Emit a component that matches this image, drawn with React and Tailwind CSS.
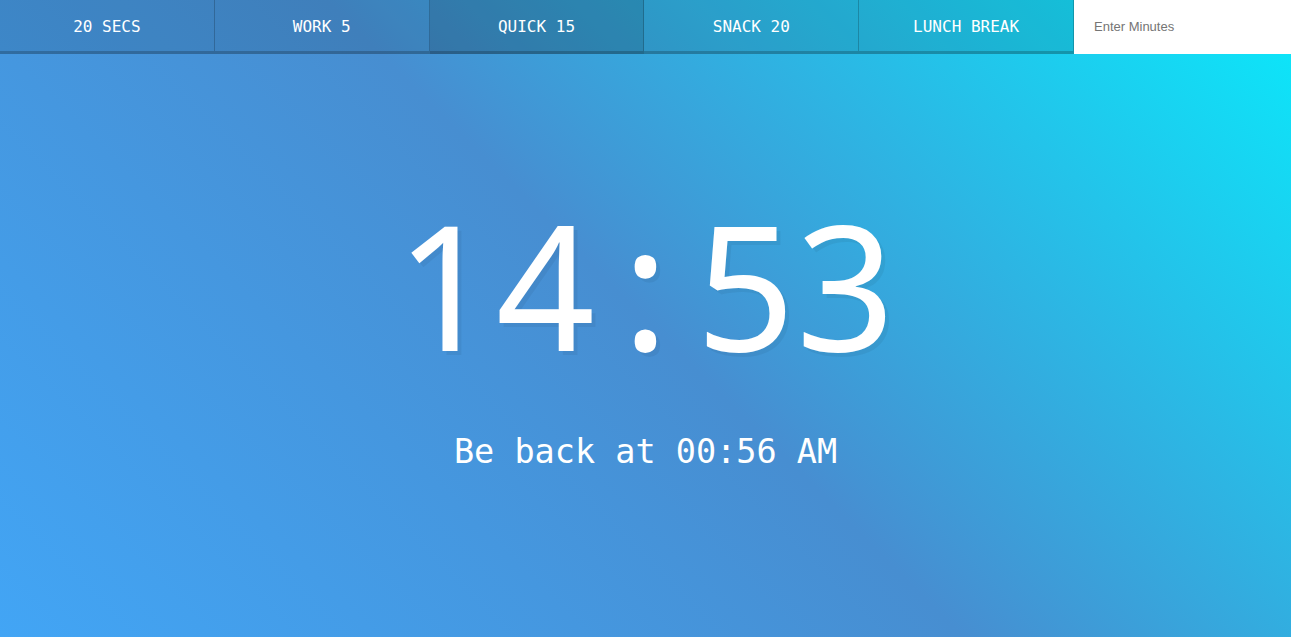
export default function App() {
  const buttons = ["20 Secs", "Work 5", "Quick 15", "Snack 20", "Lunch Break"];
  const chars = ["1", "4", ":", "5", "3"];
  return (
    <div className="flex h-[637px] w-full flex-col bg-[linear-gradient(45deg,#42a5f5_0%,#478ed1_50%,#0ae9fb_100%)] text-white">
      <div className="flex h-[54px]">
        {buttons.map((b, i) => (
          <button
            key={b}
            className={`flex-1 border-r border-b-[3px] border-black/20 pt-[2px] ${
              i === 2 ? "bg-black/20" : "bg-black/10"
            } font-['DejaVu_Sans_Mono',monospace] text-[16px] uppercase text-white`}
          >
            {b}
          </button>
        ))}
        <form className="flex w-[217px]">
          <input
            type="text"
            placeholder="Enter Minutes"
            className="w-full flex-1 bg-white pl-[20px] font-['Liberation_Sans',Arial,sans-serif] text-[13px] text-black outline-none placeholder:text-[#757575]"
          />
        </form>
      </div>
      <div className="flex flex-1 flex-col items-center pt-[144px]">
        <h1 className="flex font-['Noto_Sans',sans-serif] text-[173px] font-normal leading-none [text-shadow:4px_4px_0_rgba(0,0,0,0.05)]">
          {chars.map((c, i) => (
            <span key={i} className="inline-block w-[100px] text-center">
              {c}
            </span>
          ))}
        </h1>
        <p className="mt-[64px] font-['DejaVu_Sans_Mono',monospace] text-[33.5px] leading-none">
          Be back at 00:56 AM
        </p>
      </div>
    </div>
  );
}
